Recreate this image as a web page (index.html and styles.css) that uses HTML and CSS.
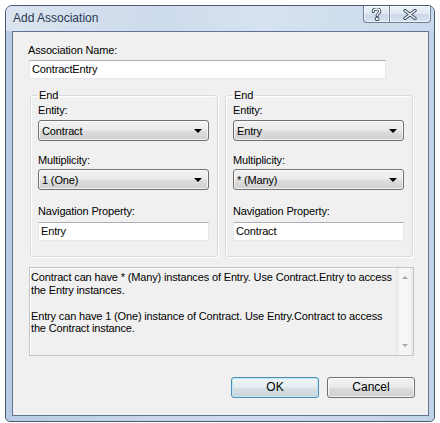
FILE: index.html
```html
<!DOCTYPE html>
<html>
<head>
<meta charset="utf-8">
<title>Add Association</title>
<link rel="stylesheet" href="styles.css">
</head>
<body>
<div class="window">
  <div class="titlebar">
    <span class="title">Add Association</span>
    <div class="caption-buttons">
      <div class="cbtn help">
        <svg width="11" height="13" viewBox="0 0 11 13">
          <path d="M2.2 3.6 C2.2 1.6 3.8 1 5.5 1 C7.4 1 8.8 2 8.8 3.6 C8.8 5.2 6.2 5.6 6.2 7.6" fill="none" stroke="#3a4a60" stroke-width="3.2" stroke-linecap="round"/>
          <path d="M2.2 3.6 C2.2 1.6 3.8 1 5.5 1 C7.4 1 8.8 2 8.8 3.6 C8.8 5.2 6.2 5.6 6.2 7.6" fill="none" stroke="#ffffff" stroke-width="1.3" stroke-linecap="round"/>
          <rect x="4.4" y="9.3" width="3.4" height="3.2" rx="0.6" fill="#ffffff" stroke="#3a4a60" stroke-width="1"/>
        </svg>
      </div>
      <div class="cbtn close">
        <svg width="14" height="11" viewBox="0 0 14 11">
          <path d="M2 1.5 L12 9.5 M12 1.5 L2 9.5" fill="none" stroke="#3a4a60" stroke-width="3.4" stroke-linecap="round"/>
          <path d="M2 1.5 L12 9.5 M12 1.5 L2 9.5" fill="none" stroke="#ffffff" stroke-width="1.4" stroke-linecap="round"/>
        </svg>
      </div>
    </div>
  </div>
  <div class="client">
    <div class="label name-label">Association Name:</div>
    <div class="textbox name-box">ContractEntry</div>
    <div class="groups">
      <fieldset class="group">
        <legend>End</legend>
        <div class="label first">Entity:</div>
        <div class="combo"><span>Contract</span><span class="arrow"></span></div>
        <div class="label mid">Multiplicity:</div>
        <div class="combo combo-tight"><span>1 (One)</span><span class="arrow"></span></div>
        <div class="label nav">Navigation Property:</div>
        <div class="textbox nav-box">Entry</div>
      </fieldset>
      <fieldset class="group">
        <legend>End</legend>
        <div class="label first">Entity:</div>
        <div class="combo"><span>Entry</span><span class="arrow"></span></div>
        <div class="label mid">Multiplicity:</div>
        <div class="combo combo-tight"><span>* (Many)</span><span class="arrow"></span></div>
        <div class="label nav">Navigation Property:</div>
        <div class="textbox nav-box">Contract</div>
      </fieldset>
    </div>
    <div class="desc">
      <div class="desc-text">
        <p>Contract can have * (Many) instances of Entry. Use Contract.Entry to access the Entry instances.</p>
        <p>Entry can have 1 (One) instance of Contract. Use Entry.Contract to access the Contract instance.</p>
      </div>
      <div class="scrollbar">
        <span class="sarrow up"></span>
        <span class="sarrow down"></span>
      </div>
    </div>
    <div class="buttons">
      <div class="button default">OK</div>
      <div class="button">Cancel</div>
    </div>
  </div>
</div>
</body>
</html>
```
FILE: styles.css
```css
html, body {
  margin: 0;
  padding: 0;
  background: #ffffff;
}

body {
  font-family: "Liberation Sans", Arial, sans-serif;
  font-size: 11px;
  letter-spacing: -0.15px;
  color: #000000;
}

.window {
  margin: 5px 0 0 5px;
  border: 1px solid #4a5b70;
  border-radius: 7px 7px 5px 5px;
  background: linear-gradient(to right, #b9cbe3 0%, #c6d5ea 30%, #cfdcee 60%, #c2d2e8 100%);
  padding: 0 5px 5px 6px;
  box-sizing: border-box;
  width: 430px;
  height: 417px;
  display: flex;
  flex-direction: column;
}

.titlebar {
  height: 25px;
  display: flex;
  align-items: flex-start;
  justify-content: space-between;
  background: linear-gradient(to right, #dbe5f1 0%, #cedbec 35%, #d6e2f0 60%, #cad9ec 100%);
  margin: 0 -5px 0 -6px;
  padding: 0 3px 0 7px;
  border-radius: 6px 6px 0 0;
}

.title {
  font-size: 12px;
  letter-spacing: 0;
  line-height: 22px;
  margin-top: 1px;
  color: #283850;
}

.caption-buttons {
  display: flex;
  height: 17px;
}

.cbtn {
  height: 16px;
  border: 1px solid #6f8199;
  border-top: none;
  background: linear-gradient(to bottom, #eef3f9 0%, #dde6f1 50%, #ccd8e8 51%, #d9e3f0 100%);
  display: flex;
  align-items: center;
  justify-content: center;
  box-shadow: inset 0 0 0 1px rgba(255,255,255,0.6);
}

.cbtn.help {
  width: 25px;
  border-radius: 0 0 0 4px;
}

.cbtn.close {
  width: 40px;
  border-left: none;
  border-radius: 0 0 4px 0;
}

.client {
  flex: 1;
  border: 1px solid #5f7592;
  background: #f0f0f0;
  display: flex;
  flex-direction: column;
  align-items: flex-start;
}

.label {
  line-height: 13px;
  height: 13px;
  white-space: nowrap;
}

.name-label {
  margin: 12px 0 0 15px;
}

.textbox {
  box-sizing: border-box;
  height: 19px;
  background: #ffffff;
  border: 1px solid #e2e8ee;
  border-top-color: #abadb3;
  line-height: 17px;
  padding-left: 2px;
  white-space: nowrap;
}

.name-box {
  margin: 3px 0 0 16px;
  width: 357px;
}

.groups {
  display: flex;
  gap: 7px;
  margin: 10px 0 0 17px;
}

.group {
  width: 188px;
  box-sizing: border-box;
  margin: 0;
  border: 1px solid #d5dde3;
  border-radius: 3px;
  box-shadow: inset 1px 1px 0 #ffffff, 1px 1px 0 #ffffff;
  padding: 3px 7px 15px 7px;
  min-width: 0;
  display: flex;
  flex-direction: column;
}

.group legend {
  line-height: 12px;
  padding: 0 1px;
  margin-left: 0;
}

.label.first {
  margin: 0;
}

.label.mid {
  margin-top: 13px;
}

.label.nav {
  margin-top: 15px;
}

.combo {
  box-sizing: border-box;
  margin-top: 3px;
  width: 171px;
  height: 21px;
  border: 1px solid #707070;
  border-radius: 3px;
  background: linear-gradient(to bottom, #f2f2f2 0%, #ebebeb 45%, #dddddd 55%, #cfcfcf 100%);
  box-shadow: inset 0 0 0 1px rgba(255,255,255,0.7);
  display: flex;
  align-items: center;
  justify-content: space-between;
  padding: 0 6px 0 3px;
  white-space: nowrap;
}

.combo-tight {
  margin-top: 2px;
}

.arrow {
  width: 0;
  height: 0;
  border-left: 4px solid transparent;
  border-right: 4px solid transparent;
  border-top: 4px solid #000000;
  margin-top: 1px;
}

.nav-box {
  margin-top: 4px;
  width: 171px;
}

.desc {
  box-sizing: border-box;
  margin: 10px 0 0 16px;
  width: 385px;
  height: 89px;
  border: 1px solid #c4c4c4;
  box-shadow: inset 1px 1px 0 #ffffff;
  display: flex;
}

.desc-text {
  flex: 1;
  padding: 3px 0 0 1px;
  line-height: 12.8px;
}

.desc-text p {
  margin: 0 0 13px 0;
}

.scrollbar {
  width: 16px;
  background: linear-gradient(to right, #eaeaea 0%, #f6f6f6 20%, #f6f6f6 80%, #e6e6e6 100%);
  border-left: 1px solid #e8e8e8;
  display: flex;
  flex-direction: column;
  justify-content: space-between;
  align-items: center;
  padding: 8px 0 8px 0;
}

.sarrow {
  width: 0;
  height: 0;
  border-left: 3px solid transparent;
  border-right: 3px solid transparent;
}

.sarrow.up {
  border-bottom: 3px solid #a8a8a8;
}

.sarrow.down {
  border-top: 3px solid #a8a8a8;
}

.buttons {
  align-self: stretch;
  display: flex;
  justify-content: flex-end;
  gap: 8px;
  margin-top: 21px;
  padding-right: 13px;
}

.button {
  box-sizing: border-box;
  width: 88px;
  height: 21px;
  border: 1px solid #707070;
  border-radius: 3px;
  background: linear-gradient(to bottom, #f2f2f2 0%, #ebebeb 45%, #dddddd 55%, #cfcfcf 100%);
  box-shadow: inset 0 0 0 1px rgba(255,255,255,0.75);
  text-align: center;
  line-height: 19px;
  font-size: 12px;
  letter-spacing: 0;
}

.button.default {
  border-color: #4f8fb5;
  background: linear-gradient(to bottom, #eef4f6 0%, #e6eef1 45%, #d6e0e4 55%, #c9d5da 100%);
  box-shadow: inset 0 0 0 1px #bfe7f6;
}
```
